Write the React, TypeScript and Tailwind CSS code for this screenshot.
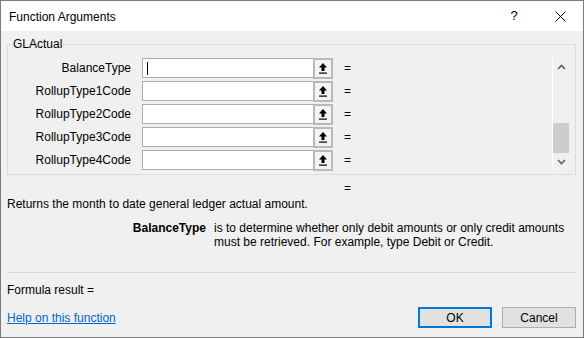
import React from "react";

const font = { fontFamily: '"Liberation Sans", Arial, sans-serif' };

function RefBtn() {
  return (
    <div className="w-[20px] h-[21px] border-2 border-[#b9b9b9] bg-[#f4f4f4] flex items-center justify-center">
      <svg width="8" height="11" viewBox="0 0 8 11">
        <polygon points="4,0 8,4.5 0,4.5" fill="#000" />
        <rect x="2.5" y="4" width="3" height="4" fill="#000" />
        <rect x="0" y="9.5" width="8" height="1.2" fill="#000" />
      </svg>
    </div>
  );
}

function Row({ label, cursor }: { label: string; cursor?: boolean }) {
  return (
    <div className="flex items-center h-[20px]">
      <div className="w-[124px] text-right pr-[1px]">{label}</div>
      <div className="ml-[10px] w-[171px] h-[20px] bg-white border border-r-0 border-[#adadad] flex items-center">
        {cursor && <div className="ml-[4px] w-[1px] h-[13px] bg-black" />}
      </div>
      <RefBtn />
      <div className="ml-[11px]">=</div>
    </div>
  );
}

export default function App() {
  return (
    <div
      className="w-[584px] h-[338px] border border-[#7a7a7a] bg-[#f0f0f0] flex flex-col text-[12px] leading-[16px] text-black overflow-hidden"
      style={font}
    >
      <div className="h-[30px] bg-white flex items-center pl-[8px] shrink-0">
        <div className="flex-1 pt-[1px]">Function Arguments</div>
        <div className="w-[12px] text-center mr-[35px] text-[13px]">?</div>
        <svg width="11" height="11" viewBox="0 0 11 11" className="mr-[17px]">
          <path d="M0.5 0.5 L10.5 10.5 M10.5 0.5 L0.5 10.5" stroke="#000" strokeWidth="1" />
        </svg>
      </div>

      <div className="flex-1 flex flex-col px-[6px]">
        <fieldset className="mt-[5px] border border-[#dcdcdc] mr-[1px] pt-[6px] pb-[4px] pl-0 pr-[6px] flex">
          <legend className="ml-[4px] px-[1px]">GLActual</legend>
          <div className="flex-1 flex flex-col gap-[3px]">
            <Row label="BalanceType" cursor />
            <Row label="RollupType1Code" />
            <Row label="RollupType2Code" />
            <Row label="RollupType3Code" />
            <Row label="RollupType4Code" />
          </div>
          <div className="w-[17px] h-[112px] border-l border-white flex flex-col">
            <div className="h-[17px] flex items-center justify-center">
              <svg width="9" height="6" viewBox="0 0 9 6">
                <path d="M1 5 L4.5 1.5 L8 5" stroke="#606060" strokeWidth="1.6" fill="none" />
              </svg>
            </div>
            <div className="flex-1 flex flex-col justify-end">
              <div className="h-[30px] bg-[#cdcdcd]" />
            </div>
            <div className="h-[17px] flex items-center justify-center">
              <svg width="9" height="6" viewBox="0 0 9 6">
                <path d="M1 1 L4.5 4.5 L8 1" stroke="#606060" strokeWidth="1.6" fill="none" />
              </svg>
            </div>
          </div>
        </fieldset>

        <div className="mt-[5px] pl-[337px]">=</div>
        <div>Returns the month to date general ledger actual amount.</div>

        <div className="mt-[9px] flex leading-[14px]">
          <div className="w-[199px] text-right font-bold">BalanceType</div>
          <div className="ml-[8px]">
            is to determine whether only debit amounts or only credit amounts
            <br />
            must be retrieved. For example, type Debit or Credit.
          </div>
        </div>

        <div className="mt-[23px] h-px bg-[#dadada] mr-[1px]" />

        <div className="mt-[9px]">Formula result =</div>

        <div className="mt-[9px] flex items-center">
          <a className="flex-1 text-[#0066cc] underline">Help on this function</a>
          <button className="w-[74px] h-[21px] border-2 border-[#0078d7] bg-[#e1e1e1] flex items-center justify-center">
            OK
          </button>
          <button className="ml-[10px] mr-[1px] w-[74px] h-[21px] border border-[#adadad] bg-[#e1e1e1] flex items-center justify-center">
            Cancel
          </button>
        </div>
      </div>
    </div>
  );
}
